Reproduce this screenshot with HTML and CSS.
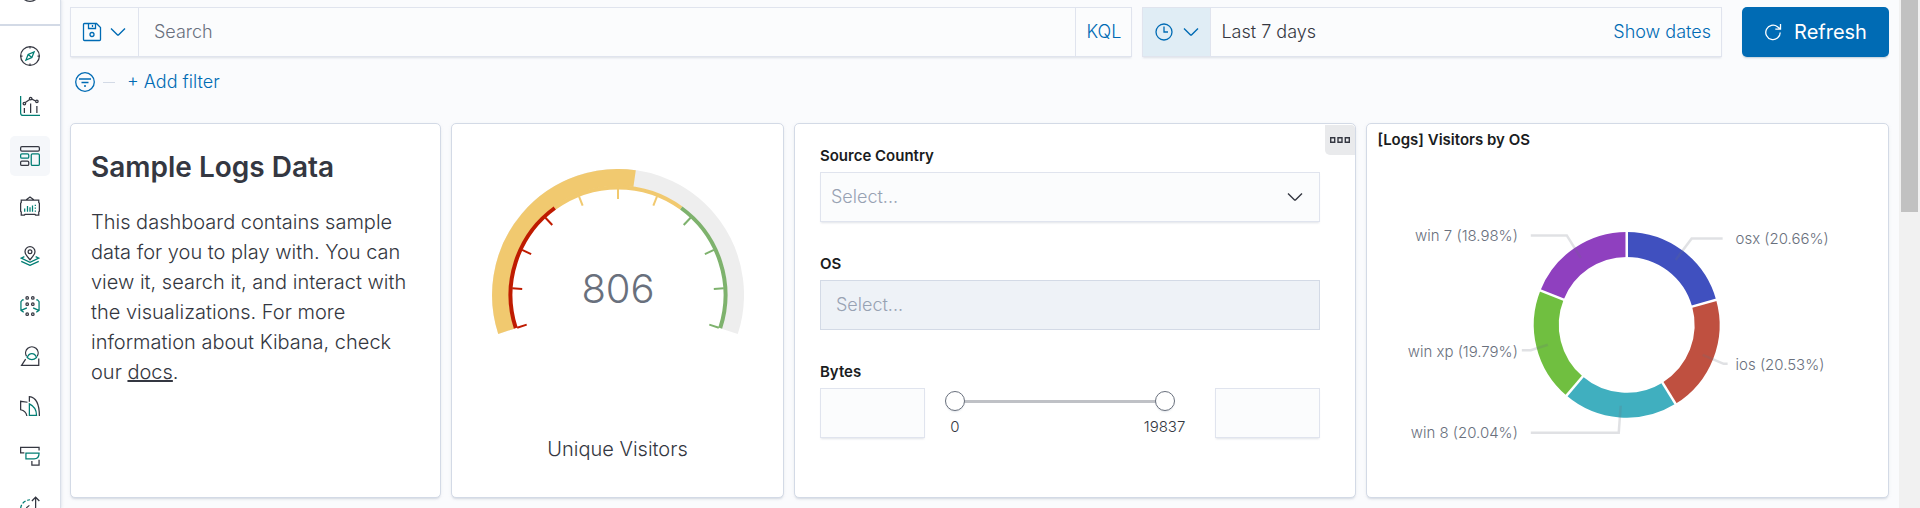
FILE: index.html
```html
<!DOCTYPE html>
<html lang="en">
<head>
<meta charset="utf-8">
<title>Dashboard</title>
<link rel="stylesheet" href="styles.css">
</head>
<body>
<div class="app">
  <nav class="nav" aria-label="Applications">
    <div class="nav-recent">
      <svg class="nav-icon" viewBox="0 0 32 32"><circle cx="16" cy="16" r="15"/><path d="M16 7v9h7"/></svg>
    </div>
    <div class="nav-list">
      <a class="nav-link" href="#" aria-label="Discover">
        <svg class="nav-icon" viewBox="0 0 32 32"><circle cx="16" cy="16" r="15"/><path d="M16 1v3M16 28v3M1 16h3M28 16h3"/><path class="accent" d="M22.500 9.500L19 18.500L9.500 22.500L13 13.500ZM13 13.500L19 18.500"/></svg>
      </a>
      <a class="nav-link" href="#" aria-label="Visualize">
        <svg class="nav-icon" viewBox="0 0 32 32"><path class="accent" d="M1 0v27a4 4 0 0 0 4 4h27"/><circle cx="7" cy="12" r="2"/><circle cx="17" cy="4" r="2"/><circle cx="27" cy="8.500" r="2"/><path d="M8.500 10.500L15.500 5.500M19 5l6 3M7 19v8M17 12v15M27 16v11"/></svg>
      </a>
      <a class="nav-link nav-link-active" href="#" aria-label="Dashboard" aria-current="page">
        <svg class="nav-icon" viewBox="0 0 32 32"><rect x="1" y="1" width="30" height="7" rx="2"/><rect x="1" y="24" width="13" height="7" rx="2"/><rect class="accent" x="1" y="12.500" width="13" height="7" rx="2"/><rect class="accent" x="18" y="12.500" width="13" height="18.500" rx="2"/></svg>
      </a>
      <a class="nav-link" href="#" aria-label="Canvas">
        <svg class="nav-icon" viewBox="0 0 32 32"><path d="M2 6.500h28v4l1 1v13l-1 1v5h-5l-1-1h-16l-1 1H2v-5l-1-1v-13l1-1zM10 6l6-4.500L22 6"/><path class="accent" d="M7.500 20v5M12 16v9M16 18v7M20 15v10M24.500 14v2M24.500 18.500v2M24.500 23v2"/></svg>
      </a>
      <a class="nav-link" href="#" aria-label="Maps">
        <svg class="nav-icon" viewBox="0 0 32 32"><path d="M16 22C12 17.500 8 13.500 8 9a8 8 0 0 1 16 0c0 4.500-4 8.500-8 13z"/><circle cx="16" cy="9" r="3"/><path class="accent" d="M7 17l-5 2.500l14 6.500l14-6.500l-5-2.500M2 24.500l14 6.500l14-6.500"/></svg>
      </a>
      <a class="nav-link" href="#" aria-label="Machine Learning">
        <svg class="nav-icon" viewBox="0 0 32 32"><circle cx="11.500" cy="3" r="2"/><circle cx="20.500" cy="3" r="2"/><circle cx="11.500" cy="13" r="2"/><circle cx="20.500" cy="13" r="2"/><circle cx="11.500" cy="29" r="2"/><circle cx="20.500" cy="29" r="2"/><path class="accent" d="M6 6H4L1.500 9v14L6 26M2 23l9-4M26 6h2l2.500 3v14L26 26M30 23l-9-4"/></svg>
      </a>
      <a class="nav-link" href="#" aria-label="Metrics">
        <svg class="nav-icon" viewBox="0 0 32 32"><path d="M10.500 16.500a10 10 0 1 1 17 0M9 21L2.500 31H30V20"/><path class="accent" d="M11.500 18.500c3-8.500 12-8.500 15 0c-4.500 4-10.500 4-15 0z"/></svg>
      </a>
      <a class="nav-link" href="#" aria-label="Logs">
        <svg class="nav-icon" viewBox="0 0 32 32"><path d="M12 10L1 8.500V22c5 1 9 4 10 10M15 9V1c9 1 16 10 16 31"/><path class="accent" d="M15 12.500V31h11.500c0-9-4-15-11.500-18.500z"/></svg>
      </a>
      <a class="nav-link" href="#" aria-label="APM">
        <svg class="nav-icon" viewBox="0 0 32 32"><path d="M7 11H1V2h29.500v5M19 24v6.500h11.500V22"/><path class="accent" d="M9.500 11.500h21c0 6-3 9-8 9h-13z"/></svg>
      </a>
      <a class="nav-link" href="#" aria-label="Uptime">
        <svg class="nav-icon" viewBox="0 0 32 32"><path d="M19 8l6-6l6 6M25 2v15c0 9-6 14-14 14M10 19l5-4"/><path class="accent" stroke-dasharray="6 3" d="M1 20C2 12 7 7 16 6"/></svg>
      </a>
    </div>
  </nav>

  <main class="main">
    <div class="query">
      <div class="field search">
        <button class="saved" type="button" aria-label="Saved queries">
          <svg class="icon icon-save" viewBox="0 0 18 18"><path d="M1.500 .500h12l4 4v12a1 1 0 0 1-1 1h-15a1 1 0 0 1-1-1v-15a1 1 0 0 1 1-1zM5.500 .500v5h7v-5M9.500 2v2"/><circle cx="9" cy="11.500" r="2"/></svg>
          <svg class="icon icon-chevron" viewBox="0 0 16 16"><path d="M1 4.500l6.300 6.200a1 1 0 0 0 1.400 0L15 4.500"/></svg>
        </button>
        <input class="search-input" type="text" placeholder="Search" aria-label="Search">
        <button class="kql" type="button">KQL</button>
      </div>
      <div class="field dates">
        <button class="quick" type="button" aria-label="Quick date select">
          <svg class="icon icon-clock" viewBox="0 0 18 18"><circle cx="9" cy="9" r="8"/><path d="M9 3.500V9h4"/></svg>
          <svg class="icon icon-chevron" viewBox="0 0 16 16"><path d="M1 4.500l6.300 6.200a1 1 0 0 0 1.400 0L15 4.500"/></svg>
        </button>
        <button class="range-text" type="button"><span>Last 7 days</span><span class="show-dates">Show dates</span></button>
      </div>
      <button class="refresh" type="button">
        <svg class="icon icon-refresh" viewBox="0 0 18 18"><path d="M16.200 9.500A7.200 7.200 0 1 1 13.500 3.800L16.300 6M16.500 1v5.200h-5.200"/></svg>
        <span>Refresh</span>
      </button>
    </div>

    <div class="filters">
      <button class="filter-button" type="button" aria-label="Filter options">
        <svg class="icon icon-filter" viewBox="0 0 20 20"><circle cx="10" cy="10" r="9.300"/><path d="M4 7h12M6.500 10.500h7M9 14h2"/></svg>
      </button>
      <span class="filter-line"></span>
      <button class="add-filter" type="button">+ Add filter</button>
    </div>

    <div class="grid">
      <section class="panel span-10 markdown">
        <h1>Sample Logs Data</h1>
        <p>This dashboard contains sample data for you to play with. You can view it, search it, and interact with the visualizations. For more information about Kibana, check our <a href="#">docs</a>.</p>
      </section>

      <section class="panel span-9 gauge">
        <svg class="gauge-chart" viewBox="-126 -126 252 170" role="img" aria-label="806 unique visitors">
          <g class="band">
            <path stroke="#eeeeee" d="M-111.700 36.300A117.500 117.500 0 1 1 111.700 36.300"/>
            <path stroke="#f1c96f" d="M-111.700 36.300A117.500 117.500 0 0 1 16.600 -116.300"/>
          </g>
          <g class="scale">
            <path stroke="#f1c96f" d="M-63.200 -87A107.500 107.500 0 0 1 63.200 -87"/>
            <path stroke="#bf1b00" d="M-102.200 33.200A107.500 107.500 0 0 1 -63.200 -87"/>
            <path stroke="#7eb26d" d="M63.200 -87A107.500 107.500 0 0 1 102.200 33.200"/>
          </g>
          <g class="ticks">
            <g stroke="#bf1b00">
              <path transform="rotate(-108)" d="M0-106v10"/><path transform="rotate(-86.400)" d="M0-106v10"/><path transform="rotate(-64.800)" d="M0-106v10"/><path transform="rotate(-43.200)" d="M0-106v10"/>
            </g>
            <g stroke="#f1c96f">
              <path transform="rotate(-21.600)" d="M0-106v10"/><path d="M0-106v10"/><path transform="rotate(21.600)" d="M0-106v10"/>
            </g>
            <g stroke="#7eb26d">
              <path transform="rotate(43.200)" d="M0-106v10"/><path transform="rotate(64.800)" d="M0-106v10"/><path transform="rotate(86.400)" d="M0-106v10"/><path transform="rotate(108)" d="M0-106v10"/>
            </g>
          </g>
          <text class="gauge-value" x="0" y="8">806</text>
        </svg>
        <div class="gauge-label">Unique Visitors</div>
      </section>

      <section class="panel span-15 controls">
        <button class="panel-menu" type="button" aria-label="Panel options">
          <svg class="icon icon-dots" viewBox="0 0 20 6"><path d="M.700 .700h4v4.600h-4zM8 .700h4v4.600h-4zM15.300 .700h4v4.600h-4z"/></svg>
        </button>
        <div class="control">
          <label for="country">Source Country</label>
          <div class="select-wrap">
            <select id="country" class="box"><option>Select...</option></select>
            <svg class="icon icon-chevron select-arrow" viewBox="0 0 16 16"><path d="M1 4.500l6.300 6.200a1 1 0 0 0 1.400 0L15 4.500"/></svg>
          </div>
        </div>
        <div class="control">
          <label for="os">OS</label>
          <select id="os" class="box box-disabled" disabled><option>Select...</option></select>
        </div>
        <div class="control">
          <label for="bytes-min">Bytes</label>
          <div class="bytes">
            <input id="bytes-min" class="box box-number" type="text">
            <div class="slider">
              <div class="slider-rail">
                <input class="slider-input" type="range" min="0" max="19837" value="0" aria-label="Minimum bytes">
                <input class="slider-input" type="range" min="0" max="19837" value="19837" aria-label="Maximum bytes">
              </div>
              <div class="slider-labels"><span>0</span><span>19837</span></div>
            </div>
            <input class="box box-number" type="text" aria-label="Maximum bytes value">
          </div>
        </div>
      </section>

      <section class="panel span-14 pie">
        <h2>[Logs] Visitors by OS</h2>
        <svg class="pie-chart" viewBox="-260 -171 522 343" role="img" aria-label="Visitors by OS">
          <g class="ring">
            <path stroke="#4050bf" d="M0 -80.500A80.500 80.500 0 0 1 77.500 -21.600"/>
            <path stroke="#bf5040" d="M77.500 -21.600A80.500 80.500 0 0 1 42.300 68.500"/>
            <path stroke="#40afbf" d="M42.300 68.500A80.500 80.500 0 0 1 -52.200 61.300"/>
            <path stroke="#70bf40" d="M-52.200 61.300A80.500 80.500 0 0 1 -74.800 -29.800"/>
            <path stroke="#8f40bf" d="M-74.800 -29.800A80.500 80.500 0 0 1 0 -80.500"/>
          </g>
          <g class="gaps">
            <path d="M0-66v-30"/><path transform="rotate(74.400)" d="M0-66v-30"/><path transform="rotate(148.300)" d="M0-66v-30"/><path transform="rotate(220.400)" d="M0-66v-30"/><path transform="rotate(291.700)" d="M0-66v-30"/>
          </g>
          <g class="leaders">
            <path d="M49-65L65-86.500H96"/>
            <path d="M76 30L97 39H101"/>
            <path d="M-6 81L-8 108H-96"/>
            <path d="M-79 20L-96 25.500H-105"/>
            <path d="M-46-67L-60-89.500H-96"/>
          </g>
          <g class="slices">
            <text x="109" y="-81">osx (20.66%)</text>
            <text x="109" y="45">ios (20.53%)</text>
            <text class="left" x="-109" y="113">win 8 (20.04%)</text>
            <text class="left" x="-109" y="32">win xp (19.79%)</text>
            <text class="left" x="-109" y="-84">win 7 (18.98%)</text>
          </g>
        </svg>
      </section>
    </div>
  </main>

  <div class="scrollbar"><div class="scroll-thumb"></div></div>
</div>
</body>
</html>
```
FILE: styles.css
```css
* {
  box-sizing: border-box;
}

body {
  margin: 0;
  background: #fafbfd;
  color: #343741;
  font: 300 18px/24px Inter, "Liberation Sans", sans-serif;
}

button,
input,
select {
  margin: 0;
  padding: 0;
  border: 0;
  border-radius: 0;
  background: none;
  color: inherit;
  font: inherit;
  outline: 0;
}

button {
  cursor: pointer;
}

.app {
  display: flex;
  height: 100vh;
  overflow: hidden;
}

.icon,
.nav-icon {
  display: block;
  flex: none;
  fill: none;
  stroke: currentColor;
}

/* Side navigation */
.nav {
  flex: none;
  width: 60px;
  background: #fff;
  box-shadow: 1px 0 1px #d9dfe9, 2px 0 3px rgba(152, 162, 179, 0.2);
  overflow-y: clip;
}

.nav-recent {
  display: flex;
  align-items: flex-end;
  justify-content: center;
  height: 26px;
  padding-bottom: 22px;
  border-bottom: 2px solid #d3dae6;
  overflow: hidden;
}

.nav-icon {
  width: 20px;
  height: 20px;
  stroke: #343741;
  stroke-width: 2;
}

.accent {
  stroke: #017d73;
}

.nav-list {
  display: flex;
  flex-direction: column;
  align-items: center;
  gap: 10px;
  padding-top: 10px;
}

.nav-link {
  display: flex;
  align-items: center;
  justify-content: center;
  width: 40px;
  height: 40px;
  border-radius: 5px;
}

.nav-link-active {
  background: #f5f7fa;
}

/* Query bar */
.main {
  flex: 1;
  min-width: 0;
  padding: 7px 10px 10px;
}

.query {
  display: flex;
  gap: 10px;
}

.field {
  display: flex;
  height: 50px;
  border: 1px solid #e0e4ee;
  background: #fbfcfd;
  box-shadow: 0 2px 2px -1px rgba(152, 162, 179, 0.3);
}

.search {
  flex: 1063;
}

.dates {
  flex: 579;
}

.saved,
.quick {
  display: flex;
  flex: none;
  align-items: center;
  justify-content: center;
  gap: 9px;
  width: 68px;
  border-right: 1px solid #e0e4ee;
  color: #006bb4;
}

.quick {
  gap: 10px;
  background: #e0edf5;
}

.icon-save,
.icon-clock,
.icon-refresh {
  width: 18px;
  height: 18px;
}

.icon-save {
  overflow: visible;
}

.icon-chevron {
  width: 16px;
  height: 16px;
  stroke-width: 1.400;
}

.icon-save,
.icon-clock,
.icon-refresh {
  stroke-width: 1.300;
}

.search-input {
  flex: 1;
  min-width: 0;
  padding: 0 15px;
}

.search-input::placeholder {
  color: #69707d;
  opacity: 1;
}

.kql {
  flex: none;
  width: 56px;
  border-left: 1px solid #e0e4ee;
  color: #006bb4;
}

.range-text {
  display: flex;
  flex: 1;
  align-items: center;
  justify-content: space-between;
  padding: 0 10px;
}

.show-dates {
  color: #006bb4;
}

.refresh {
  display: flex;
  flex: none;
  align-items: center;
  justify-content: center;
  gap: 12px;
  width: 147px;
  height: 50px;
  margin-left: 10px;
  border-radius: 5px;
  background: #006bb4;
  box-shadow: 0 2px 2px -1px rgba(54, 97, 126, 0.3);
  color: #fff;
  font-size: 20px;
  font-weight: 400;
}

/* Filter bar */
.filters {
  display: flex;
  align-items: center;
  height: 30px;
  margin: 10px 0 26px;
  padding-left: 5px;
}

.filter-button {
  color: #006bb4;
}

.icon-filter {
  width: 20px;
  height: 20px;
  stroke-width: 1.300;
}

.filter-line {
  width: 12px;
  height: 1px;
  margin: 0 12px 0 8px;
  background: #d3dae6;
}

.add-filter {
  color: #006bb4;
}

/* Dashboard panels */
.grid {
  display: grid;
  grid-template-columns: repeat(48, minmax(0, 1fr));
  gap: 10px;
}

.panel {
  position: relative;
  min-height: 375px;
  border: 1px solid #d3dae6;
  border-radius: 5px;
  background: #fff;
  box-shadow: 0 2px 2px -1px rgba(152, 162, 179, 0.3), 0 1px 5px -2px rgba(152, 162, 179, 0.3);
}

.span-9 {
  grid-column: span 9;
}

.span-10 {
  grid-column: span 10;
}

.span-14 {
  grid-column: span 14;
}

.span-15 {
  grid-column: span 15;
}

.markdown {
  padding: 23px 20px 20px;
  font-size: 20px;
  font-weight: 350;
  line-height: 30px;
}

.markdown h1 {
  margin: 0 0 20px;
  font-size: 28px;
  font-weight: 600;
  line-height: 40px;
}

.markdown p {
  margin: 0;
}

.markdown a {
  color: inherit;
  text-decoration: underline;
}

.gauge {
  display: flex;
  flex-direction: column;
  align-items: center;
  justify-content: space-between;
  padding: 45px 20px 33px;
}

.gauge-chart {
  width: 252px;
  max-width: 100%;
  fill: none;
}

.band {
  stroke-width: 17;
}

.scale {
  stroke-width: 4;
}

.ticks {
  stroke-width: 2;
}

.gauge-value {
  fill: #69707d;
  font-size: 40px;
  font-weight: 350;
  text-anchor: middle;
}

.gauge-label {
  font-size: 20px;
  line-height: 30px;
}

.controls {
  display: flex;
  flex-direction: column;
  gap: 32px;
  padding: 22px 35px 20px 25px;
}

.panel-menu {
  position: absolute;
  top: 1px;
  right: 0;
  display: flex;
  align-items: center;
  justify-content: center;
  width: 30px;
  height: 30px;
  border-radius: 0 4px 0 5px;
  background: #e9eaec;
}

.icon-dots {
  width: 20px;
  height: 6px;
  stroke-width: 1.400;
}

.control label {
  display: block;
  margin-bottom: 6px;
  color: #1a1c21;
  font-size: 15px;
  font-weight: 600;
  line-height: 20px;
}

.box {
  display: block;
  width: 100%;
  height: 50px;
  padding: 0 10px;
  border: 1px solid #e0e4ee;
  background: #fbfcfd;
  box-shadow: 0 2px 2px -1px rgba(152, 162, 179, 0.3);
  color: #98a2b3;
  appearance: none;
}

.box-disabled {
  padding: 0 15px;
  border-color: #d3dae6;
  background: #eef2f7;
  box-shadow: none;
  opacity: 1;
}

.select-wrap {
  position: relative;
}

.select-arrow {
  position: absolute;
  top: 17px;
  right: 17px;
  pointer-events: none;
}

.bytes {
  display: flex;
}

.box-number {
  flex: none;
  width: 105px;
}

.slider {
  flex: 1;
  padding: 3px 40px 0 20px;
}

.slider-rail {
  display: grid;
  background: linear-gradient(#bfc1c6, #bfc1c6) center / calc(100% - 20px) 3px no-repeat;
}

.slider-input {
  grid-area: 1 / 1;
  width: 100%;
  height: 20px;
  appearance: none;
  pointer-events: none;
}

.slider-input::-webkit-slider-thumb {
  width: 20px;
  height: 20px;
  border: 1px solid #69707d;
  border-radius: 50%;
  background: #fff;
  box-shadow: 0 2px 2px -1px rgba(152, 162, 179, 0.3);
  appearance: none;
  pointer-events: auto;
}

.slider-labels {
  display: flex;
  justify-content: space-between;
  margin-top: 6px;
  font-size: 15px;
  line-height: 20px;
}

.slider-labels span {
  display: flex;
  justify-content: center;
  width: 20px;
}

.pie {
  display: flex;
  flex-direction: column;
}

.pie h2 {
  margin: 0;
  padding: 6px 11px 4px;
  color: #1a1c21;
  font-size: 15px;
  font-weight: 600;
  line-height: 20px;
}

.pie-chart {
  display: block;
  width: 100%;
}

.ring {
  fill: none;
  stroke-width: 25;
}

.gaps {
  stroke: #fff;
  stroke-width: 2.500;
}

.leaders {
  fill: none;
  stroke: #69707d;
  stroke-width: 2.500;
  opacity: 0.2;
}

.slices {
  fill: #69707d;
  font-size: 15px;
}

.left {
  text-anchor: end;
}

/* Page scrollbar */
.scrollbar {
  flex: none;
  width: 21px;
  padding: 0 2px;
  background: #f1f1f1;
}

.scroll-thumb {
  height: 212px;
  background: #c1c1c1;
}
```
